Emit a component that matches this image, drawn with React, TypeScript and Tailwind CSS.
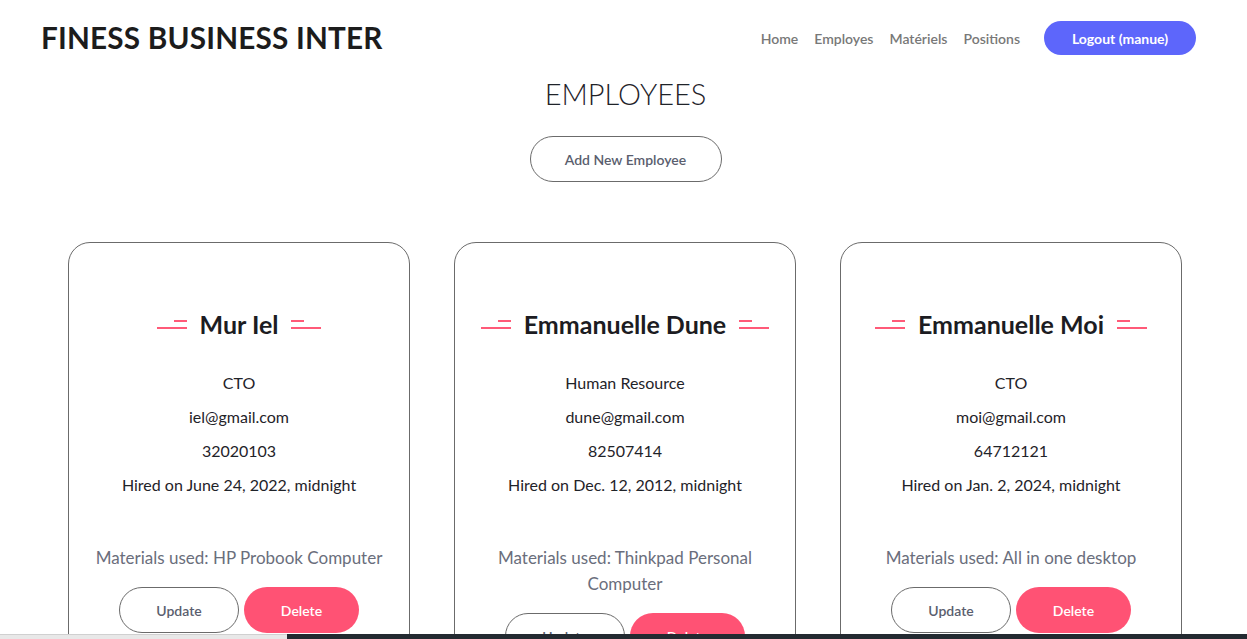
const EMPLOYEES = [
  {
    name: 'Mur Iel',
    position: 'CTO',
    email: 'iel@gmail.com',
    phone: '32020103',
    hired: 'June 24, 2022, midnight',
    materials: 'HP Probook Computer',
  },
  {
    name: 'Emmanuelle Dune',
    position: 'Human Resource',
    email: 'dune@gmail.com',
    phone: '82507414',
    hired: 'Dec. 12, 2012, midnight',
    materials: 'Thinkpad Personal Computer',
  },
  {
    name: 'Emmanuelle Moi',
    position: 'CTO',
    email: 'moi@gmail.com',
    phone: '64712121',
    hired: 'Jan. 2, 2024, midnight',
    materials: 'All in one desktop',
  },
];

const NAV = ['Home', 'Employes', 'Matériels', 'Positions'];

function Deco({ flip }: { flip?: boolean }) {
  return (
    <svg width="30" height="12" viewBox="0 0 30 12" className={flip ? '-scale-x-100' : ''}>
      <line x1="17" y1="3" x2="30" y2="3" stroke="#ff5a78" strokeWidth="2" />
      <line x1="0" y1="10" x2="30" y2="10" stroke="#ff5a78" strokeWidth="2" />
    </svg>
  );
}

function EmployeeCard({ emp }: { emp: (typeof EMPLOYEES)[number] }) {
  return (
    <div className="w-[342px] h-[440px] border border-[#6b6b6b] rounded-[22px] px-6 pt-[65px] flex flex-col items-center text-center">
      <div className="flex items-center gap-[13px] h-8">
        <Deco />
        <h3 className="text-[25px] font-bold text-[#1c1c22] leading-8">{emp.name}</h3>
        <Deco flip />
      </div>
      <div className="mt-[31px] flex flex-col gap-[10px] text-[16px] leading-6 text-[#1f2329]">
        <p>{emp.position}</p>
        <p>{emp.email}</p>
        <p>{emp.phone}</p>
        <p>Hired on {emp.hired}</p>
      </div>
      <p className="mt-12 text-[17px] leading-[26px] text-[#6a6e7c]">
        Materials used: {emp.materials}
      </p>
      <div className="mt-4 flex gap-[5px]">
        <button className="w-[120px] h-[46px] rounded-full border border-[#6b6b6b] text-[14px] font-semibold text-[#5a5e6e]">
          Update
        </button>
        <button className="w-[115px] h-[46px] rounded-full bg-[#ff5274] text-[14px] font-semibold text-white">
          Delete
        </button>
      </div>
    </div>
  );
}

export default function App() {
  return (
    <div className="min-h-screen bg-white font-['Lato','Open_Sans',sans-serif] overflow-hidden">
      {/* Header */}
      <header className="flex items-center justify-between pl-[41px] pr-[51px] h-[76px]">
        <h1 className="text-[29.7px] font-bold text-[#1c1c1c] tracking-[0.2px]">FINESS BUSINESS INTER</h1>
        <nav className="flex items-center">
          <div className="flex items-center gap-4 text-[14px] font-semibold text-[#787878]">
            {NAV.map((item) => (
              <a key={item} href="#">{item}</a>
            ))}
          </div>
          <button className="ml-6 w-[152px] h-[34px] rounded-full bg-[#5d66fb] text-white text-[14px] font-bold">
            Logout (manue)
          </button>
        </nav>
      </header>

      <main className="pl-1">
        <h2 className="text-center text-[29px] font-light text-[#1f2329] leading-9">EMPLOYEES</h2>

        <div className="flex justify-center mt-[24px]">
          <button className="w-[192px] h-[46px] rounded-full border border-[#6b6b6b] text-[14px] font-semibold text-[#5a5e6e]">
            Add New Employee
          </button>
        </div>

        <div className="mt-[60px] flex justify-center gap-[44px] pr-[1px]">
          {EMPLOYEES.map((emp) => (
            <EmployeeCard key={emp.email} emp={emp} />
          ))}
        </div>
      </main>

      {/* bottom strip */}
      <div className="fixed bottom-0 left-0 right-0 h-[5px] flex">
        <div className="w-[287px] bg-[#e8e8e8] border-t border-[#d0d0d0]" />
        <div className="flex-1 bg-[#232a31]" />
      </div>
    </div>
  );
}
